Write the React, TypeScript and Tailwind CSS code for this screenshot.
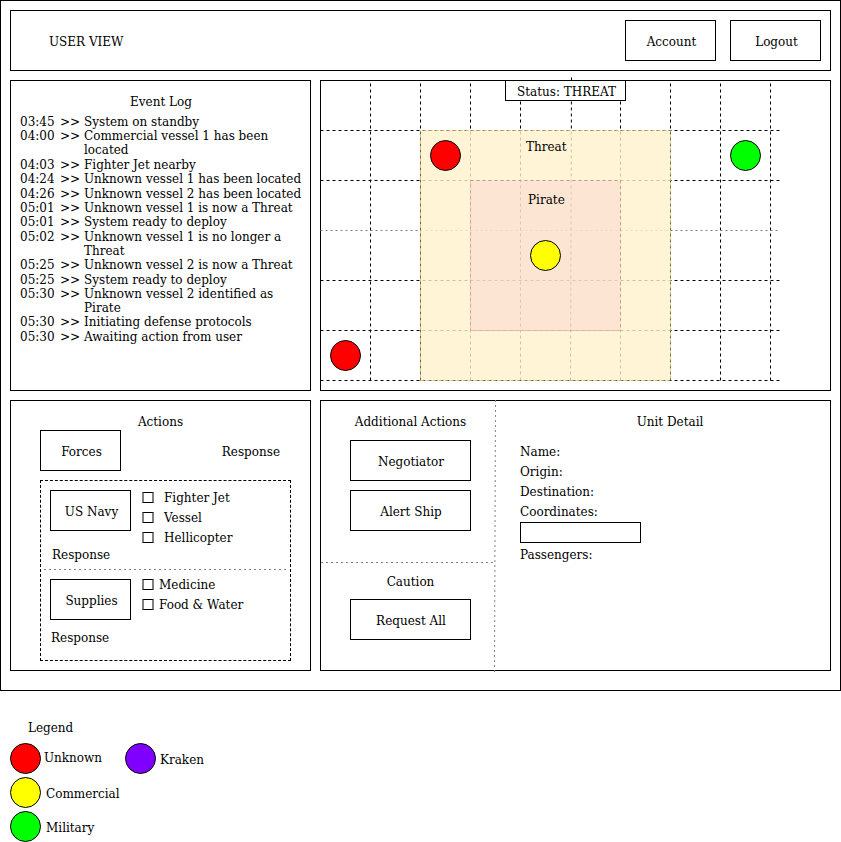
import type { ReactNode } from "react";

const EVENTS: [string, string][] = [
  ["03:45", "System on standby"],
  ["04:00", "Commercial vessel 1 has been located"],
  ["04:03", "Fighter Jet nearby"],
  ["04:24", "Unknown vessel 1 has been located"],
  ["04:26", "Unknown vessel 2 has been located"],
  ["05:01", "Unknown vessel 1 is now a Threat"],
  ["05:01", "System ready to deploy"],
  ["05:02", "Unknown vessel 1 is no longer a Threat"],
  ["05:25", "Unknown vessel 2 is now a Threat"],
  ["05:25", "System ready to deploy"],
  ["05:30", "Unknown vessel 2 identified as Pirate"],
  ["05:30", "Initiating defense protocols"],
  ["05:30", "Awaiting action from user"],
];

function BoxButton({ className, children }: { className: string; children: ReactNode }) {
  return (
    <button type="button" className={`shrink-0 border border-black bg-white pl-0.5 pt-0.5 text-center ${className}`}>
      {children}
    </button>
  );
}

function Marker({ className }: { className: string }) {
  return <span className={`block size-[31px] shrink-0 rounded-full border border-black ${className}`} />;
}

function Check({ label, wide = false }: { label: string; wide?: boolean }) {
  return (
    <label className={`flex h-5 items-center ${wide ? "gap-2.5" : "gap-[5px]"}`}>
      <input
        type="checkbox"
        className="h-[11px] w-3 shrink-0 appearance-none border-x-2 border-y border-x-[#808080] border-y-black bg-white checked:bg-black"
      />
      <span className="whitespace-nowrap pt-0.5">{label}</span>
    </label>
  );
}

function DottedRule({ className }: { className: string }) {
  return (
    <div
      className={`h-px bg-[repeating-linear-gradient(to_right,#808080_0px,#808080_2px,transparent_2px,transparent_5px)] ${className}`}
    />
  );
}

function MapGrid() {
  return (
    <svg width="511" height="311" className="absolute -left-px -top-px overflow-visible" aria-hidden="true">
      <g stroke="#000" strokeDasharray="3 3" fill="none">
        {[50.5, 100.5, 150.5, 200.5, 300.5, 350.5, 400.5, 450.5].map((x) => (
          <path key={x} d={`M${x} 300.5V3`} />
        ))}
        <path d="M250.5 300.5L251.5 -3" />
        {[50.5, 100.5, 200.5, 250.5, 300.5].map((y) => (
          <path key={y} d={`M0.5 ${y}H460`} />
        ))}
      </g>
      <path d="M0.5 150.5H458" stroke="#808080" strokeDasharray="2 3" />
      <rect x="100.5" y="50.5" width="250" height="250" fill="#fff2cc" fillOpacity="0.8" stroke="#d6b656" strokeOpacity="0.8" strokeDasharray="3 3" strokeDashoffset="3" />
      <rect x="150.5" y="100.5" width="150" height="150" fill="#f8cecc" fillOpacity="0.4" stroke="#b85450" strokeOpacity="0.4" strokeDasharray="3 3" />
    </svg>
  );
}

export default function App() {
  return (
    <div className="bg-white font-['DejaVu_Serif',serif] text-[12px] leading-[14px] text-black">
      <main className="flex flex-col gap-[9px] border border-black px-[9px] pb-[19px] pt-[9px]">
        <header className="flex h-[61px] items-center gap-3.5 border border-black pl-[38px] pr-[9px]">
          <h1 className="mr-auto pt-0.5">USER VIEW</h1>
          <BoxButton className="h-[41px] w-[91px]">Account</BoxButton>
          <BoxButton className="h-[41px] w-[91px]">Logout</BoxButton>
        </header>

        <div className="grid grid-cols-[301px_minmax(0,1fr)] gap-[9px]">
          <section className="h-[311px] border border-black pl-[9px] pr-1 pt-3.5">
            <h2 className="pr-1 text-center">Event Log</h2>
            <ol className="mt-1.5 flex h-[229px] flex-col justify-between">
              {EVENTS.map(([time, text], i) => (
                <li key={i} className="flex">
                  <span className="w-10 shrink-0">{time}</span>
                  <span className="w-6 shrink-0">&gt;&gt;</span>
                  <span>{text}</span>
                </li>
              ))}
            </ol>
          </section>

          <section aria-label="Map" className="relative border border-black">
            <MapGrid />
            <p className="absolute left-[184px] -top-px h-[21px] w-[121px] border border-black bg-white pl-0.5 pt-1 text-center">
              Status: THREAT
            </p>
            <span className="absolute left-[205px] top-[59px]">Threat</span>
            <span className="absolute left-[207px] top-[112px]">Pirate</span>
            <div className="absolute left-[109px] top-[59px]"><Marker className="bg-[#ff0000]" /></div>
            <div className="absolute left-[409px] top-[59px]"><Marker className="bg-[#00ff00]" /></div>
            <div className="absolute left-[209px] top-[159px]"><Marker className="bg-[#ffff00]" /></div>
            <div className="absolute left-[9px] top-[259px]"><Marker className="bg-[#ff0000]" /></div>
          </section>

          <section className="h-[271px] border border-black pl-[29px] pr-[19px] pt-3.5">
            <h2 className="pr-2.5 text-center">Actions</h2>
            <div className="mt-px flex items-center justify-between pr-[11px]">
              <BoxButton className="h-[41px] w-[81px]">Forces</BoxButton>
              <span className="pt-0.5">Response</span>
            </div>
            <div className="mt-[9px] h-[181px] border border-dashed border-black">
              <div className="flex h-[88px] gap-[11px] pl-[9px] pt-[9px]">
                <div>
                  <BoxButton className="h-[41px] w-[81px]">US Navy</BoxButton>
                  <p className="mt-[17px] pl-0.5">Response</p>
                </div>
                <div className="-mt-[3px]">
                  <Check label="Fighter Jet" wide />
                  <Check label="Vessel" wide />
                  <Check label="Hellicopter" wide />
                </div>
              </div>
              <DottedRule className="ml-[3px] mr-0.5" />
              <div className="flex gap-[11px] pl-[9px] pt-[9px]">
                <div>
                  <BoxButton className="h-[41px] w-[81px]">Supplies</BoxButton>
                  <p className="mt-[11px] pl-px">Response</p>
                </div>
                <div className="-mt-[5px]">
                  <Check label="Medicine" />
                  <Check label="Food & Water" />
                </div>
              </div>
            </div>
          </section>

          <section className="flex h-[271px] border border-black">
            <div className="w-[173px] shrink-0">
              <div className="flex h-[161px] flex-col items-center gap-[9px] pl-[5px] pt-3.5">
                <h2 className="mb-0.5 pl-px">Additional Actions</h2>
                <BoxButton className="h-[41px] w-[121px]">Negotiator</BoxButton>
                <BoxButton className="h-[41px] w-[121px]">Alert Ship</BoxButton>
              </div>
              <DottedRule className="-mr-0.5" />
              <div className="flex flex-col items-center gap-2.5 pl-[5px] pt-3">
                <h2 className="pl-px">Caution</h2>
                <BoxButton className="h-[41px] w-[121px]">Request All</BoxButton>
              </div>
            </div>
            <svg width="3" height="271" className="-mt-px shrink-0 overflow-visible" aria-hidden="true">
              <path d="M1.5 0L0.5 272" stroke="#808080" strokeDasharray="2 3" />
            </svg>
            <div className="flex-1 pl-[23px] pt-3.5">
              <h2 className="pr-2.5 text-center">Unit Detail</h2>
              <div className="mt-4 flex flex-col items-start gap-1.5">
                <p>Name:</p>
                <p>Origin:</p>
                <p>Destination:</p>
                <label htmlFor="coordinates">Coordinates:</label>
              </div>
              <input id="coordinates" type="text" className="mt-[3px] block h-[21px] w-[121px] border border-black px-1" />
              <p className="mt-[5px]">Passengers:</p>
            </div>
          </section>
        </div>
      </main>

      <section className="pl-2.5 pt-[30px]">
        <h2 className="pl-[18px]">Legend</h2>
        <ul className="mt-2 grid grid-cols-[115px_auto] justify-start gap-y-[3px]">
          <li className="flex items-center gap-[3px]"><Marker className="bg-[#ff0000]" /><span className="pb-0.5">Unknown</span></li>
          <li className="flex items-center gap-1"><Marker className="bg-[#7f00ff]" /><span className="pt-0.5">Kraken</span></li>
          <li className="col-span-2 flex items-center gap-[5px]"><Marker className="bg-[#ffff00]" /><span className="pt-0.5">Commercial</span></li>
          <li className="col-span-2 flex items-center gap-[5px]"><Marker className="bg-[#00ff00]" /><span className="pt-0.5">Military</span></li>
        </ul>
      </section>
    </div>
  );
}
